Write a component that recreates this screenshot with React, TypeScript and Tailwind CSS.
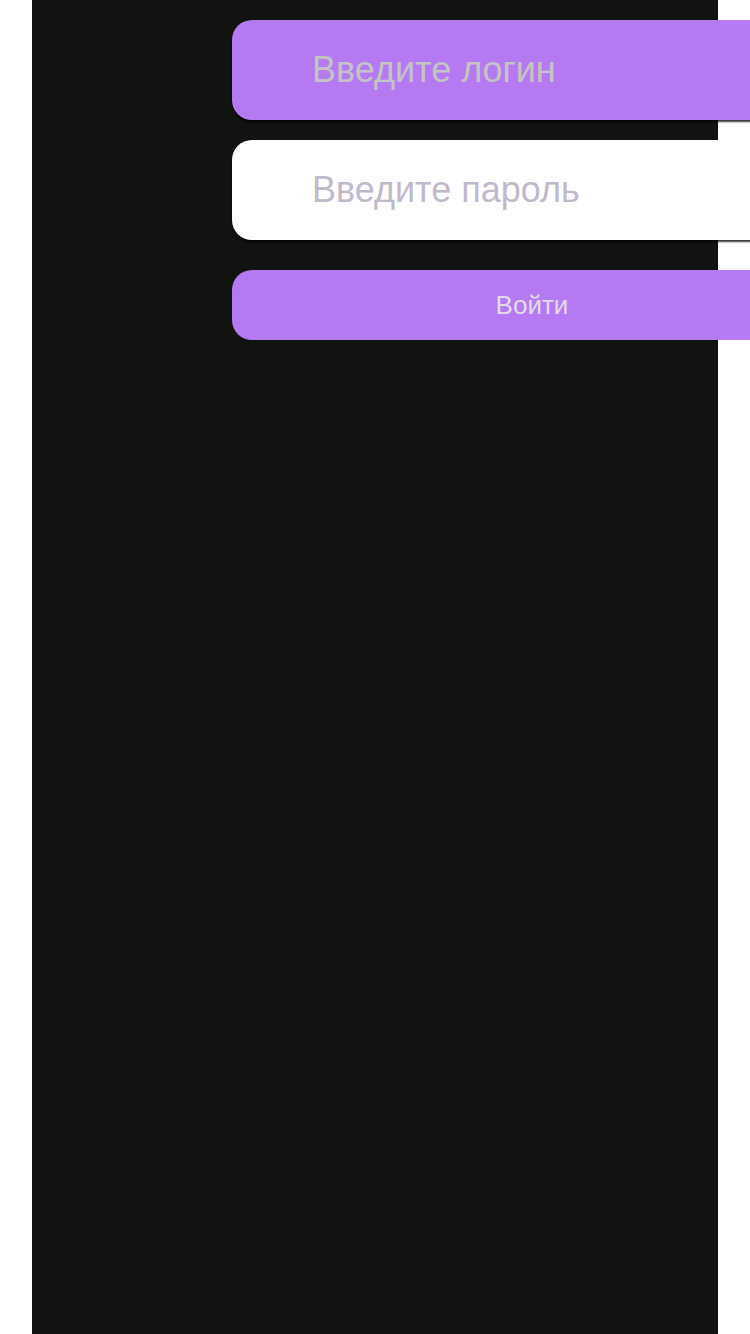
import React from "react";

const App = () => {
  return (
    <div className="w-[750px] h-[1334px] bg-white overflow-hidden font-['Liberation_Sans',Arial,sans-serif]">
      <div className="ml-8 w-[686px] h-full bg-[#111310] pt-5 pl-[200px] flex flex-col">
        {/* Login */}
        <input
          type="text"
          placeholder="Введите логин"
          className="w-[600px] h-[100px] shrink-0 rounded-[20px] bg-[#b57af1] pl-20 text-[36px] text-[#c4c4c4] placeholder:text-[#c4c4c4] outline-none shadow-[0_2px_2px_rgba(0,0,0,0.8)]"
        />
        {/* Password */}
        <input
          type="password"
          placeholder="Введите пароль"
          className="mt-5 w-[600px] h-[100px] shrink-0 rounded-[20px] bg-white pl-20 text-[36px] text-[#c1b9cb] placeholder:text-[#c1b9cb] outline-none shadow-[0_2px_2px_rgba(0,0,0,0.8)]"
        />
        <button className="mt-[30px] w-[600px] h-[70px] shrink-0 rounded-[20px] bg-[#b57af1] text-[26px] text-[#e2dbe6]">
          Войти
        </button>
      </div>
    </div>
  );
};

export default App;
